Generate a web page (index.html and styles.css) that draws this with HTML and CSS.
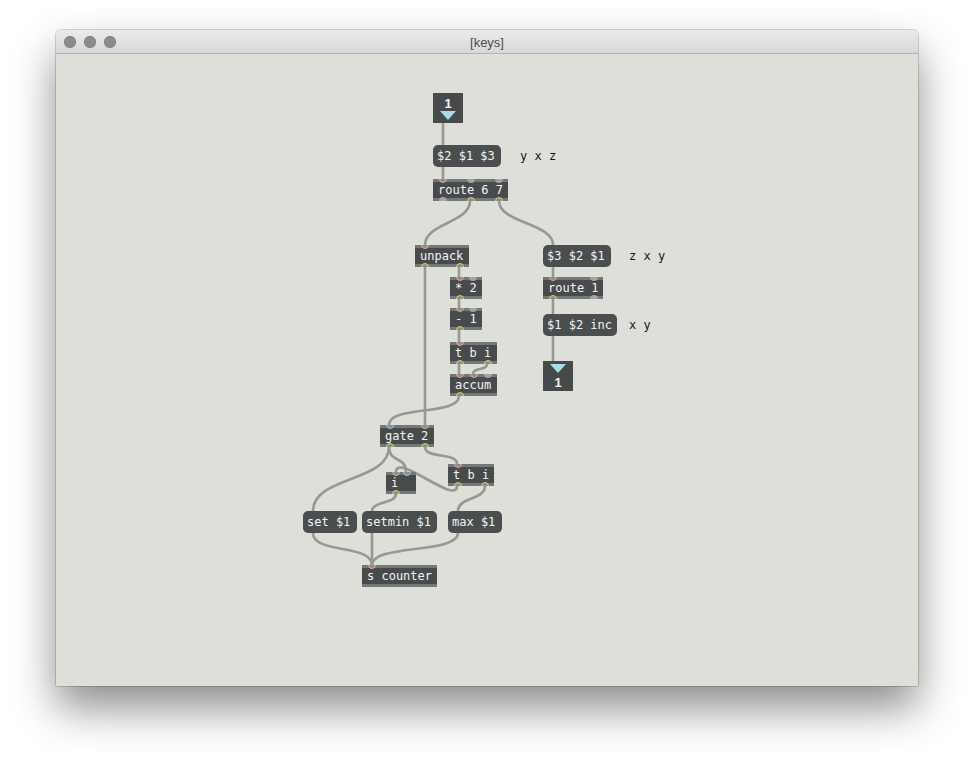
FILE: index.html
```html
<!DOCTYPE html>
<html>
<head>
<meta charset="utf-8">
<title>[keys]</title>
<link rel="stylesheet" href="styles.css">
</head>
<body>
<div class="window">
  <div class="titlebar">
    <div class="lights"><span class="light"></span><span class="light"></span><span class="light"></span></div>
    <div class="title">[keys]</div>
    <div></div>
  </div>
  <div class="canvas">
    <svg class="cords" width="862" height="632" viewBox="0 0 862 632">
      <g fill="none" stroke="#979793" stroke-width="2.6" stroke-linecap="round">
        <path d="M387 69 L387 91"/>
        <path d="M387 113 L387 125"/>
        <path d="M414 147 C414 169 369 169 369 191"/>
        <path d="M443 147 C443 169 497 169 497 191"/>
        <path d="M369 213 L369 371"/>
        <path d="M403 213 L403 223"/>
        <path d="M403 245 L403 254"/>
        <path d="M403 276 L403 288"/>
        <path d="M403 310 L403 320"/>
        <path d="M431 310 C431 317 417 313 417 320"/>
        <path d="M403 342 C403 362 333 351 333 371"/>
        <path d="M497 213 L497 223"/>
        <path d="M497 245 L497 260"/>
        <path d="M497 282 L497 307"/>
        <path d="M333 393 C333 428 257 422 257 457"/>
        <path d="M333 393 C333 409 350 402 350 418"/>
        <path d="M369 393 C369 405 401 398 401 410"/>
        <path d="M401 432 C401 452 340 398 340 418"/>
        <path d="M429 432 C429 446 402 443 402 457"/>
        <path d="M340 440 C340 450 316 447 316 457"/>
        <path d="M257 479 C257 500 316 490 316 511"/>
        <path d="M316 479 L316 511"/>
        <path d="M402 479 C402 500 316 490 316 511"/>
      </g>
    </svg>

    <div class="io n-inlet"><span class="num">1</span><span class="tri tri-in"></span></div>
    <div class="io n-outlet"><span class="tri tri-out"></span><span class="num num-out">1</span></div>

    <div class="msg n-m1">$2 $1 $3</div>
    <div class="comment n-c1">y x z</div>

    <div class="obj n-route67">route 6 7
      <div class="ins"><span class="p r"></span><span class="p"></span><span class="p"></span></div>
      <div class="outs"><span class="p"></span><span class="p g"></span><span class="p g"></span></div>
    </div>

    <div class="obj n-unpack">unpack
      <div class="ins"><span class="p r"></span></div>
      <div class="outs"><span class="p g"></span><span class="p g"></span></div>
    </div>

    <div class="msg n-m2">$3 $2 $1</div>
    <div class="comment n-c2">z x y</div>

    <div class="obj n-times">* 2
      <div class="ins"><span class="p r"></span><span class="p"></span></div>
      <div class="outs"><span class="p g"></span></div>
    </div>

    <div class="obj n-route1">route 1
      <div class="ins"><span class="p r"></span><span class="p"></span></div>
      <div class="outs"><span class="p g"></span><span class="p"></span></div>
    </div>

    <div class="obj n-minus">- 1
      <div class="ins"><span class="p r"></span><span class="p"></span></div>
      <div class="outs"><span class="p g"></span></div>
    </div>

    <div class="msg n-m3">$1 $2 inc</div>
    <div class="comment n-c3">x y</div>

    <div class="obj n-tbi1">t b i
      <div class="ins"><span class="p r"></span></div>
      <div class="outs"><span class="p g"></span><span class="p g"></span></div>
    </div>

    <div class="obj n-accum">accum
      <div class="ins"><span class="p r"></span><span class="p r"></span><span class="p"></span></div>
      <div class="outs"><span class="p g"></span></div>
    </div>

    <div class="obj n-gate">gate 2
      <div class="ins"><span class="p c"></span><span class="p r"></span></div>
      <div class="outs"><span class="p g"></span><span class="p g"></span></div>
    </div>

    <div class="obj n-tbi2">t b i
      <div class="ins"><span class="p r"></span></div>
      <div class="outs"><span class="p g"></span><span class="p g"></span></div>
    </div>

    <div class="obj n-i">i
      <div class="ins"><span class="p r"></span><span class="p c"></span></div>
      <div class="outs"><span class="p g"></span></div>
    </div>

    <div class="msg n-set">set $1</div>
    <div class="msg n-setmin">setmin $1</div>
    <div class="msg n-max">max $1</div>

    <div class="obj n-send">s counter
      <div class="ins"><span class="p r"></span></div>
    </div>
  </div>
</div>
</body>
</html>
```

FILE: styles.css
```css
html, body {
  margin: 0;
  padding: 0;
  background: #ffffff;
}

body {
  width: 974px;
  height: 766px;
  overflow: hidden;
}

.window {
  margin: 30px 0 0 56px;
  width: 862px;
  height: 656px;
  border-radius: 5px 5px 2px 2px;
  box-shadow: 0 22px 44px rgba(0, 0, 0, 0.45), 0 0 0 1px rgba(0, 0, 0, 0.16);
  overflow: hidden;
  display: flex;
  flex-direction: column;
}

.titlebar {
  height: 23px;
  flex: none;
  display: grid;
  grid-template-columns: 1fr auto 1fr;
  align-items: center;
  background: linear-gradient(#ebebeb, #d7d7d7);
  border-bottom: 1px solid #b3b3b3;
}

.lights {
  display: flex;
  gap: 8px;
  padding-left: 8px;
  padding-top: 1px;
}

.light {
  width: 12px;
  height: 12px;
  border-radius: 50%;
  background: #8c8c90;
  box-shadow: inset 0 0 0 0.5px #7c7c80;
}

.title {
  font-family: "Liberation Sans", Arial, sans-serif;
  font-size: 13px;
  color: #4b4b4b;
  padding-top: 1px;
}

.canvas {
  position: relative;
  flex: 1;
  background: #dfdfda;
  font-family: "DejaVu Sans Mono", monospace;
  font-size: 12px;
}

.cords {
  position: absolute;
  left: 0;
  top: 0;
}

/* nodes */
.obj, .msg, .io, .comment {
  position: absolute;
  box-sizing: border-box;
  white-space: nowrap;
}

.obj, .msg {
  height: 22px;
  line-height: 16px;
  padding: 3px 0 0 5px;
  color: #f2f4f4;
}

.obj {
  overflow: hidden;
  background: linear-gradient(#747877 0, #747877 3px, #474b4b 3px, #474b4b 19px, #747877 19px, #747877 22px);
}

.msg {
  background: #4a4e4e;
  border-radius: 5px;
  padding-left: 4px;
}

.comment {
  line-height: 16px;
  color: #151515;
}

.ins, .outs {
  position: absolute;
  left: 0;
  right: 0;
  display: flex;
  justify-content: space-between;
  padding: 0 5.5px;
}

.ins { top: -4px; }
.outs { bottom: -4px; }

.p {
  width: 8px;
  height: 8px;
  border-radius: 50%;
  box-sizing: border-box;
  background: #a2a5a4;
}

.p.r { background: #8e8e8a; border: 1.5px solid #e79f9b; }
.p.g { background: #8e8e8a; border: 1.5px solid #cbd466; }
.p.c { background: #8e8e8a; border: 1.5px solid #7fd3df; }

.io {
  width: 30px;
  height: 30px;
  background: #464a4a;
  display: flex;
  flex-direction: column;
  align-items: center;
}

.num {
  font-family: "Liberation Sans", Arial, sans-serif;
  font-weight: bold;
  font-size: 13px;
  line-height: 13px;
  color: #f4f4f4;
  margin-top: 4px;
}

.num-out { margin-top: 3px; }

.tri {
  width: 0;
  height: 0;
  border-left: 8px solid transparent;
  border-right: 8px solid transparent;
  border-top: 9px solid #a9dce5;
}

.tri-in { margin-top: 1px; }
.tri-out { margin-top: 3px; }

/* positions on the patcher canvas */
.n-inlet   { left: 377px; top: 39px; }
.n-outlet  { left: 487px; top: 307px; }
.n-m1      { left: 377px; top: 91px;  width: 68px; }
.n-c1      { left: 464px; top: 94px; }
.n-route67 { left: 377px; top: 125px; width: 75px; }
.n-unpack  { left: 359px; top: 191px; width: 54px; }
.n-m2      { left: 487px; top: 191px; width: 68px; }
.n-c2      { left: 573px; top: 194px; }
.n-times   { left: 394px; top: 223px; width: 32px; }
.n-route1  { left: 487px; top: 223px; width: 60px; }
.n-minus   { left: 394px; top: 254px; width: 32px; }
.n-m3      { left: 487px; top: 260px; width: 74px; }
.n-c3      { left: 573px; top: 263px; }
.n-tbi1    { left: 394px; top: 288px; width: 47px; }
.n-accum   { left: 394px; top: 320px; width: 47px; }
.n-gate    { left: 324px; top: 371px; width: 54px; }
.n-tbi2    { left: 392px; top: 410px; width: 46px; }
.n-i       { left: 330px; top: 418px; width: 30px; }
.n-set     { left: 247px; top: 457px; width: 54px; }
.n-setmin  { left: 306px; top: 457px; width: 75px; }
.n-max     { left: 392px; top: 457px; width: 54px; }
.n-send    { left: 306px; top: 511px; width: 75px; }
```
